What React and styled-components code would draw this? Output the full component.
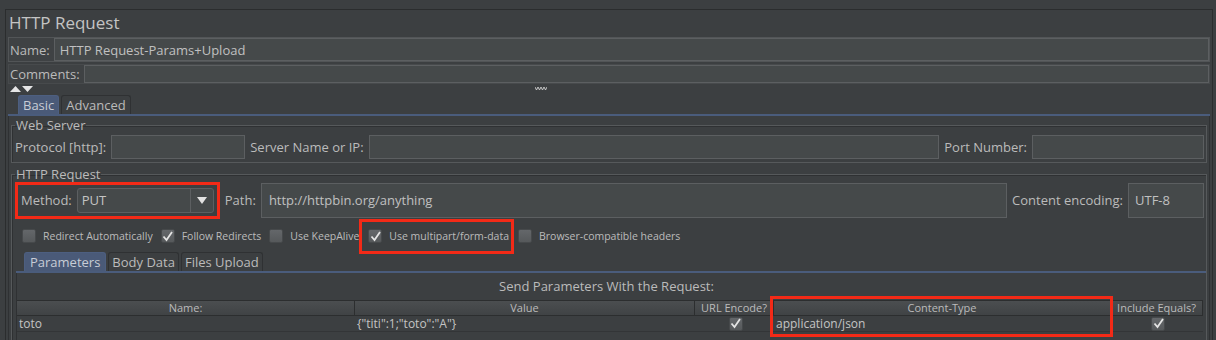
import styled, { createGlobalStyle } from "styled-components";

const GlobalStyle = createGlobalStyle`
  html, body {
    margin: 0;
    padding: 0;
    background: #3c3f41;
  }
  body {
    font-family: "Open Sans", "Liberation Sans", sans-serif;
    color: #bbbbbb;
  }
`;

const Window = styled.div`
  width: 1216px;
  height: 340px;
  overflow: hidden;
  background: #3c3f41;
  padding-top: 9px;
  box-sizing: border-box;
`;

const Frame = styled.div`
  margin: 0 3px 0 5px;
  border-top: 1px solid #2b2d2e;
  border-left: 1px solid #2b2d2e;
  border-right: 1px solid #2b2d2e;
  height: 331px;
  box-sizing: border-box;
  padding: 0 2px;
`;

const Title = styled.div`
  font-size: 17px;
  color: #c4c4c4;
  height: 27px;
  line-height: 24px;
  box-sizing: border-box;
  padding: 1px 0 0 1px;
`;

const NameRow = styled.div`
  display: flex;
  align-items: center;
  height: 25px;
  border: 1px solid #525557;
  background: #3f4244;
  box-sizing: border-box;
`;

const CommentRow = styled(NameRow)`
  margin-top: 2px;
  height: 20px;
  border-color: #474a4c;
`;

const RowLabel = styled.span`
  font-size: 13px;
  padding: 0 4px 0 1px;
  white-space: nowrap;
`;

const Field = styled.div`
  flex: ${(p) => (p.$width ? "none" : "1")};
  width: ${(p) => (p.$width ? `${p.$width}px` : "auto")};
  height: ${(p) => p.$height || 22}px;
  background: #45494a;
  border: 1px solid #5c5f61;
  box-sizing: border-box;
  font-size: 13px;
  color: #c0c0c0;
  display: flex;
  align-items: center;
  padding-left: ${(p) => p.$pad || 5}px;
  white-space: nowrap;
`;

const SplitRow = styled.div`
  position: relative;
  height: 11px;
  display: flex;
  align-items: flex-start;
  padding-top: 1px;
  box-sizing: border-box;
`;

const Arrows = styled.svg`
  margin-left: 2px;
`;

const Grip = styled.svg`
  position: absolute;
  left: 527px;
  top: 2px;
`;

const TabBar = styled.div`
  display: flex;
  align-items: flex-end;
  padding-left: ${(p) => p.$indent}px;
  height: ${(p) => p.$h}px;
  border-bottom: 2px solid #4a5c7c;
`;

const Tab = styled.div`
  font-size: ${(p) => p.$size}px;
  height: 100%;
  box-sizing: border-box;
  padding: 0 ${(p) => p.$px}px;
  display: flex;
  align-items: center;
  margin-right: 2px;
  border: 1px solid ${(p) => (p.$active ? "#4d5f80" : "#2f3133")};
  border-bottom: none;
  border-radius: 3px 3px 0 0;
  background: ${(p) => (p.$active ? "#4a5a78" : "#3c3f41")};
  color: ${(p) => (p.$active ? "#c8cdd6" : "#bbbbbb")};
`;

const TabBody = styled.div`
  border-left: 1px solid #2f3133;
  border-right: 1px solid #2f3133;
  padding: 2px 2px 0 2px;
  height: 230px;
  box-sizing: border-box;
`;

const Group = styled.fieldset`
  margin: ${(p) => p.$top || 0}px 0 0 0;
  padding: 0 2px 0 3px;
  border: 1px solid #56595b;
  min-width: 0;
  box-shadow: inset 1px 1px 0 #2f3133;
`;

const Legend = styled.legend`
  font-size: 13px;
  padding: 0 1px;
  margin-left: 0;
  line-height: 14px;
`;

const FieldRow = styled.div`
  display: flex;
  align-items: center;
  gap: 5px;
  height: ${(p) => p.$h}px;
`;

const Label = styled.span`
  font-size: 13px;
  white-space: nowrap;
`;

const Highlight = styled.div`
  display: flex;
  align-items: center;
  gap: ${(p) => p.$gap || 0}px;
  border: 3px solid #f32a17;
  box-sizing: border-box;
  height: ${(p) => p.$h}px;
  padding: 0 ${(p) => p.$pr || 3}px 0 ${(p) => p.$pl || 3}px;
  margin-right: ${(p) => p.$mr || 0}px;
`;

const Combo = styled.div`
  width: 137px;
  height: 25px;
  box-sizing: border-box;
  border: 1px solid #5c5f61;
  border-radius: 3px;
  background: #45494a;
  display: flex;
  font-size: 13px;
`;

const ComboText = styled.div`
  flex: 1;
  display: flex;
  align-items: center;
  padding-left: 4px;
  color: #c4c4c4;
`;

const ComboButton = styled.div`
  width: 22px;
  border-left: 1px solid #5c5f61;
  display: flex;
  align-items: center;
  justify-content: center;
`;

const Checks = styled.div`
  display: flex;
  align-items: center;
  height: 32px;
  padding-left: 7px;
  margin-top: 1px;
`;

const CheckItem = styled.div`
  display: flex;
  align-items: center;
  gap: 7px;
  margin-right: ${(p) => (p.$last ? 0 : 8)}px;
  font-size: 10.5px;
  white-space: nowrap;
`;

const Box = styled.span`
  width: 12px;
  height: 12px;
  border-radius: 2px;
  background: linear-gradient(#64676a, #56595b);
  border: 1px solid #46494b;
  display: inline-flex;
  align-items: center;
  justify-content: center;
  flex: none;
`;

const Params = styled.div`
  margin-left: 1px;
  width: 1190px;
`;

const ParamsBody = styled.div`
  border-left: 1px solid #2f3133;
  height: 80px;
  position: relative;
`;

const Caption = styled.div`
  text-align: center;
  font-size: 13px;
  height: 27px;
  line-height: 27px;
  padding-right: 10px;
`;

const Table = styled.div`
  display: grid;
  grid-template-columns: 338px 340px 79px 337px 92px;
`;

const Head = styled.div`
  font-size: 11px;
  height: 14px;
  line-height: 14px;
  text-align: center;
  background: linear-gradient(#4b4e50, #404345);
  border-top: 1px solid #2c2e2f;
  border-bottom: 1px solid #2c2e2f;
  border-right: 1px solid #2c2e2f;
  white-space: nowrap;
`;

const Cell = styled.div`
  font-size: 12px;
  height: 15px;
  line-height: 15px;
  padding-left: 2px;
  border-bottom: 1px solid #333537;
  display: flex;
  align-items: center;
  justify-content: ${(p) => (p.$center ? "center" : "flex-start")};
  white-space: nowrap;
  color: #c4c4c4;
`;

const Mark = styled.div`
  position: absolute;
  left: 753px;
  top: 23px;
  width: 343px;
  height: 41px;
  border: 3px solid #f32a17;
  box-sizing: border-box;
  pointer-events: none;
`;

function CheckBox({ checked }) {
  return (
    <Box>
      {checked && (
        <svg width="11" height="11" viewBox="0 0 11 11">
          <path d="M1.5 5.5 L4.5 9 L10 1" fill="none" stroke="#e4e4e4" strokeWidth="1.8" />
        </svg>
      )}
    </Box>
  );
}

export default function App() {
  return (
    <Window>
      <GlobalStyle />
      <Frame>
        <Title>HTTP Request</Title>
        <NameRow>
          <RowLabel>Name:</RowLabel>
          <Field $height={23}>HTTP Request-Params+Upload</Field>
        </NameRow>
        <CommentRow>
          <RowLabel>Comments:</RowLabel>
          <Field $height={18} />
        </CommentRow>
        <SplitRow>
          <Arrows width="24" height="8" viewBox="0 0 24 8">
            <polygon points="0,7 5.5,1 11,7" fill="#e6e6e6" />
            <polygon points="12,1 23,1 17.5,7" fill="#e6e6e6" />
          </Arrows>
          <Grip width="12" height="5" viewBox="0 0 12 5">
            <path d="M0 1 L1.5 4 L3 1 L4.5 4 L6 1 L7.5 4 L9 1 L10.5 4 L12 1" fill="none" stroke="#d0d0d0" strokeWidth="0.9" />
          </Grip>
        </SplitRow>
        <TabBar $indent={10} $h={19}>
          <Tab $active $size={13} $px={4}>Basic</Tab>
          <Tab $size={13} $px={4}>Advanced</Tab>
        </TabBar>
        <TabBody>
          <Group>
            <Legend>Web Server</Legend>
            <FieldRow $h={30}>
              <Label>Protocol [http]:</Label>
              <Field $width={134} $height={24} />
              <Label>Server Name or IP:</Label>
              <Field $height={24} />
              <Label>Port Number:</Label>
              <Field $width={172} $height={24} />
            </FieldRow>
          </Group>
          <Group $top={4}>
            <Legend>HTTP Request</Legend>
            <FieldRow $h={38}>
              <Highlight $h={37} $gap={5}>
                <Label>Method:</Label>
                <Combo>
                  <ComboText>PUT</ComboText>
                  <ComboButton>
                    <svg width="10" height="7" viewBox="0 0 10 7">
                      <polygon points="0,0 10,0 5,7" fill="#e2e2e2" />
                    </svg>
                  </ComboButton>
                </Combo>
              </Highlight>
              <Label>Path:</Label>
              <Field $height={35} $pad={7}>http://httpbin.org/anything</Field>
              <Label>Content encoding:</Label>
              <Field $width={76} $height={35} $pad={6}>UTF-8</Field>
            </FieldRow>
            <Checks>
              <CheckItem><CheckBox />Redirect Automatically</CheckItem>
              <CheckItem><CheckBox checked />Follow Redirects</CheckItem>
              <CheckItem $last><CheckBox />Use KeepAlive</CheckItem>
              <Highlight $h={35} $pl={6} $pr={2} $mr={4}>
                <CheckItem $last><CheckBox checked />Use multipart/form-data</CheckItem>
              </Highlight>
              <CheckItem $last><CheckBox />Browser-compatible headers</CheckItem>
            </Checks>
            <Params>
              <TabBar $indent={8} $h={19}>
                <Tab $active $size={13} $px={5}>Parameters</Tab>
                <Tab $size={13} $px={3}>Body Data</Tab>
                <Tab $size={13} $px={3}>Files Upload</Tab>
              </TabBar>
              <ParamsBody>
                <Caption>Send Parameters With the Request:</Caption>
                <Table>
                  <Head>Name:</Head>
                  <Head>Value</Head>
                  <Head>URL Encode?</Head>
                  <Head>Content-Type</Head>
                  <Head>Include Equals?</Head>
                  <Cell>toto</Cell>
                  <Cell>{'{"titi":1;"toto":"A"}'}</Cell>
                  <Cell $center><CheckBox checked /></Cell>
                  <Cell>application/json</Cell>
                  <Cell $center><CheckBox checked /></Cell>
                </Table>
                <Mark />
              </ParamsBody>
            </Params>
          </Group>
        </TabBody>
      </Frame>
    </Window>
  );
}
